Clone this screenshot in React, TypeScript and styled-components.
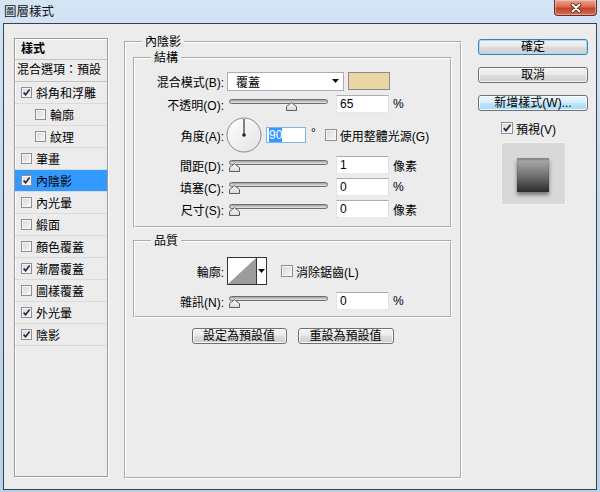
import styled, { createGlobalStyle } from 'styled-components';

const GlobalStyle = createGlobalStyle`
  html, body { margin: 0; padding: 0; background: #bcd3ec; }
  body {
    font-family: "Liberation Sans", "Noto Sans CJK TC", sans-serif;
    font-size: 12px;
    color: #000;
  }
`;

type StyleItem = { label: string; checked?: boolean; sub?: boolean; selected?: boolean };

const styleItems: StyleItem[] = [
  { label: '斜角和浮雕', checked: true },
  { label: '輪廓', sub: true },
  { label: '紋理', sub: true },
  { label: '筆畫' },
  { label: '內陰影', checked: true, selected: true },
  { label: '內光暈' },
  { label: '緞面' },
  { label: '顏色覆蓋' },
  { label: '漸層覆蓋', checked: true },
  { label: '圖樣覆蓋' },
  { label: '外光暈', checked: true },
  { label: '陰影', checked: true },
];

const Checkbox = ({ checked, size = 11 }: { checked?: boolean; size?: number }) => (
  <CheckBox $size={size}>
    {checked && (
      <svg width={size - 2} height={size - 2} viewBox="0 0 9 9">
        <path d="M1.6 4.6 L3.6 6.8 L7.6 1.6" fill="none" stroke="#1c2a48" strokeWidth="1.6" />
      </svg>
    )}
  </CheckBox>
);

const Caret = () => (
  <svg width="7" height="4" viewBox="0 0 7 4">
    <path d="M0 0 H7 L3.5 4 Z" fill="#111" />
  </svg>
);

const Slider = ({ value }: { value: number }) => (
  <SliderBox>
    <Track />
    <Thumb style={{ left: `${(value / 100) * 88}px` }}>
      <svg width="11" height="9" viewBox="0 0 11 9">
        <defs>
          <linearGradient id="thumbFill" x1="0" y1="0" x2="0" y2="1">
            <stop offset="0" stopColor="#ffffff" />
            <stop offset="1" stopColor="#d6d6d6" />
          </linearGradient>
        </defs>
        <path d="M0.5 8.5 V4.6 L5.5 0.6 L10.5 4.6 V8.5 Z" fill="url(#thumbFill)" stroke="#5c5c5c" />
      </svg>
    </Thumb>
  </SliderBox>
);

const Dial = () => (
  <svg width="36" height="36" viewBox="0 0 36 36">
    <defs>
      <linearGradient id="dialFill" x1="0" y1="0" x2="1" y2="1">
        <stop offset="0" stopColor="#ffffff" />
        <stop offset="1" stopColor="#e2e2e2" />
      </linearGradient>
    </defs>
    <circle cx="18" cy="18" r="17" fill="url(#dialFill)" stroke="#8a8a8a" />
    <path d="M18 18 V2" stroke="#333" strokeWidth="1.2" />
    <circle cx="18" cy="18" r="1.8" fill="#222" />
  </svg>
);

export default function App() {
  return (
    <>
      <GlobalStyle />
      <Window>
        <TitleBar>
          <Caption>圖層樣式</Caption>
          <CloseButton aria-label="關閉">
            <svg width="14" height="10" viewBox="0 0 14 10">
              <path d="M3.5 1.5 L10.5 8.5 M10.5 1.5 L3.5 8.5" stroke="#5b1a10" strokeWidth="3.6" strokeLinecap="round" />
              <path d="M3.5 1.5 L10.5 8.5 M10.5 1.5 L3.5 8.5" stroke="#fff" strokeWidth="2" strokeLinecap="round" />
            </svg>
          </CloseButton>
        </TitleBar>

        <Client>
          <StyleList>
            <ListHeader>樣式</ListHeader>
            <BlendRow>混合選項：預設</BlendRow>
            {styleItems.map((item) => (
              <ListItem key={item.label} $sub={item.sub} $selected={item.selected}>
                <Checkbox checked={item.checked} />
                <span>{item.label}</span>
              </ListItem>
            ))}
          </StyleList>

          <Group>
            <Legend>內陰影</Legend>
            <GroupBody>
              <SubGroup>
                <Legend>結構</Legend>
                <Rows $top={5} $bottom={7}>
                  <FieldRow $h={20}>
                    <FieldLabel>混合模式(B):</FieldLabel>
                    <Controls>
                      <Select>
                        <span>覆蓋</span>
                        <Caret />
                      </Select>
                      <Swatch $color="#e9d6a4" />
                    </Controls>
                  </FieldRow>
                  <FieldRow $h={22}>
                    <FieldLabel>不透明(O):</FieldLabel>
                    <Controls>
                      <Slider value={65} />
                      <NumberBox>65</NumberBox>
                      <Unit>%</Unit>
                    </Controls>
                  </FieldRow>
                  <FieldRow $h={36}>
                    <FieldLabel>角度(A):</FieldLabel>
                    <Controls>
                      <DialWrap>
                        <Dial />
                      </DialWrap>
                      <AngleBox>
                        <Highlight>90</Highlight>
                      </AngleBox>
                      <Degree>°</Degree>
                      <CheckLabel>
                        <Checkbox size={12} />
                        <span>使用整體光源(G)</span>
                      </CheckLabel>
                    </Controls>
                  </FieldRow>
                  <FieldRow $h={20}>
                    <FieldLabel>間距(D):</FieldLabel>
                    <Controls>
                      <Slider value={0} />
                      <NumberBox>1</NumberBox>
                      <Unit>像素</Unit>
                    </Controls>
                  </FieldRow>
                  <FieldRow $h={20}>
                    <FieldLabel>填塞(C):</FieldLabel>
                    <Controls>
                      <Slider value={0} />
                      <NumberBox>0</NumberBox>
                      <Unit>%</Unit>
                    </Controls>
                  </FieldRow>
                  <FieldRow $h={20}>
                    <FieldLabel>尺寸(S):</FieldLabel>
                    <Controls>
                      <Slider value={0} />
                      <NumberBox>0</NumberBox>
                      <Unit>像素</Unit>
                    </Controls>
                  </FieldRow>
                </Rows>
              </SubGroup>

              <SubGroup $gapTop={5}>
                <Legend>品質</Legend>
                <Rows $top={8} $bottom={5} $gap={6}>
                  <FieldRow $h={28}>
                    <FieldLabel>輪廓:</FieldLabel>
                    <Controls>
                      <ContourPicker>
                        <svg width="28" height="26" viewBox="0 0 28 26">
                          <rect width="28" height="26" fill="#fff" />
                          <polygon points="0,26 28,0 28,26" fill="#9c9c9c" />
                        </svg>
                        <ContourArrow>
                          <Caret />
                        </ContourArrow>
                      </ContourPicker>
                      <CheckLabel $ml={14}>
                        <Checkbox size={12} />
                        <span>消除鋸齒(L)</span>
                      </CheckLabel>
                    </Controls>
                  </FieldRow>
                  <FieldRow $h={20}>
                    <FieldLabel>雜訊(N):</FieldLabel>
                    <Controls>
                      <Slider value={0} />
                      <NumberBox>0</NumberBox>
                      <Unit>%</Unit>
                    </Controls>
                  </FieldRow>
                </Rows>
              </SubGroup>

              <DefaultButtons>
                <PushButton $w={95}>設定為預設值</PushButton>
                <PushButton $w={96}>重設為預設值</PushButton>
              </DefaultButtons>
            </GroupBody>
          </Group>

          <Side>
            <PushButton $variant="default">確定</PushButton>
            <PushButton>取消</PushButton>
            <PushButton $variant="hover">新增樣式(W)...</PushButton>
            <PreviewCheck>
              <Checkbox checked size={12} />
              <span>預視(V)</span>
            </PreviewCheck>
            <PreviewBox>
              <PreviewSquare />
            </PreviewBox>
          </Side>
        </Client>
      </Window>
    </>
  );
}

const Window = styled.div`
  width: 600px;
  height: 492px;
  display: flex;
  flex-direction: column;
  background: linear-gradient(180deg, #d3e4f5 0%, #c3d9ef 40%, #b8d0ea 100%);
`;

const TitleBar = styled.div`
  height: 23px;
  flex: none;
  display: flex;
  justify-content: space-between;
  align-items: flex-start;
`;

const Caption = styled.div`
  padding: 4px 0 0 4px;
  font-size: 12.5px;
  line-height: 16px;
  color: #111;
`;

const CloseButton = styled.div`
  width: 43px;
  height: 16px;
  margin-right: 3px;
  box-sizing: border-box;
  border: 1px solid #6b2a20;
  border-top: none;
  border-radius: 0 0 4px 4px;
  background: linear-gradient(180deg, #e9a796 0%, #d86a55 45%, #c2412b 55%, #d27059 100%);
  box-shadow: inset 0 0 0 1px rgba(255, 220, 210, 0.45);
  display: flex;
  align-items: center;
  justify-content: center;
`;

const Client = styled.div`
  flex: 1;
  margin: 0 3px 2px;
  border: 1px solid #34424f;
  background: #ececec;
  display: grid;
  grid-template-columns: 94px 338px 110px;
  column-gap: 16px;
  align-items: start;
  padding: 12px 0 0 10px;
`;

const StyleList = styled.div`
  margin-top: 2px;
  height: 439px;
  box-sizing: border-box;
  border: 1px solid #9a9a9a;
  box-shadow: 1px 1px 0 #fff, inset 1px 1px 0 #fff;
  display: flex;
  flex-direction: column;
`;

const ListHeader = styled.div`
  height: 21px;
  box-sizing: border-box;
  padding-left: 6px;
  line-height: 20px;
  font-weight: bold;
  border-bottom: 1px solid #c4c4c4;
`;

const BlendRow = styled.div`
  height: 22px;
  box-sizing: border-box;
  padding-left: 2px;
  line-height: 21px;
  white-space: nowrap;
  border-bottom: 1px solid #c4c4c4;
`;

const ListItem = styled.div<{ $sub?: boolean; $selected?: boolean }>`
  height: 22px;
  box-sizing: border-box;
  display: flex;
  align-items: center;
  gap: 4px;
  padding-left: ${(p) => (p.$sub ? 20 : 6)}px;
  border-bottom: 1px solid #dadada;
  background: ${(p) => (p.$selected ? '#3399ff' : 'transparent')};
  white-space: nowrap;
`;

const CheckBox = styled.span<{ $size: number }>`
  width: ${(p) => p.$size}px;
  height: ${(p) => p.$size}px;
  box-sizing: border-box;
  flex: none;
  border: 1px solid #8e8f8f;
  background: linear-gradient(135deg, #d5d7da 0%, #f8f8f8 100%);
  box-shadow: inset 0 0 0 1px #f6f6f6;
  display: inline-flex;
  align-items: center;
  justify-content: center;
`;

const Group = styled.fieldset`
  margin: -2px 0 0;
  padding: 0;
  min-width: 0;
  height: 445px;
  box-sizing: border-box;
  border: 2px groove #ffffff;
`;

const Legend = styled.legend`
  margin-left: 16px;
  padding: 0 3px;
  line-height: 16px;
  font-size: 12px;
`;

const GroupBody = styled.div`
  padding: 0 8px 0 7px;
  display: flex;
  flex-direction: column;
`;

const SubGroup = styled.fieldset<{ $gapTop?: number }>`
  margin: ${(p) => p.$gapTop ?? 0}px 0 0;
  padding: 0;
  min-width: 0;
  border: 2px groove #ffffff;
`;

const Rows = styled.div<{ $top: number; $bottom: number; $gap?: number }>`
  display: flex;
  flex-direction: column;
  gap: ${(p) => p.$gap ?? 2}px;
  padding: ${(p) => p.$top}px 0 ${(p) => p.$bottom}px;
`;

const FieldRow = styled.div<{ $h: number }>`
  height: ${(p) => p.$h}px;
  display: grid;
  grid-template-columns: 89px 1fr;
  column-gap: 3px;
  align-items: center;
`;

const FieldLabel = styled.span`
  text-align: right;
  white-space: nowrap;
`;

const Controls = styled.div`
  display: flex;
  align-items: center;
  height: 100%;
`;

const Select = styled.div`
  width: 117px;
  height: 19px;
  box-sizing: border-box;
  border: 1px solid #abadb3;
  background: #fff;
  display: flex;
  align-items: center;
  justify-content: space-between;
  padding: 0 4px 0 8px;
`;

const Swatch = styled.div<{ $color: string }>`
  width: 42px;
  height: 18px;
  margin-left: 4px;
  box-sizing: border-box;
  border: 1px solid #8a8a8a;
  background: ${(p) => p.$color};
`;

const SliderBox = styled.div`
  position: relative;
  width: 99px;
  height: 13px;
  margin: 3px 0 0 2px;
  flex: none;
`;

const Track = styled.div`
  height: 5px;
  box-sizing: border-box;
  border: 1px solid #6e6e6e;
  border-radius: 3px;
  background: linear-gradient(180deg, #a0a0a0 0%, #e8e8e8 100%);
`;

const Thumb = styled.div`
  position: absolute;
  top: 3px;
  width: 11px;
  height: 9px;
  line-height: 0;
`;

const NumberBox = styled.div`
  width: 53px;
  height: 18px;
  margin-left: 8px;
  box-sizing: border-box;
  border: 1px solid;
  border-color: #abadb3 #dbdfe6 #e3e9ef #e2e3ea;
  background: #fff;
  padding-left: 3px;
  line-height: 16px;
`;

const Unit = styled.span`
  margin-left: 4px;
  white-space: nowrap;
`;

const DialWrap = styled.div`
  margin-left: -1px;
  line-height: 0;
`;

const AngleBox = styled.div`
  width: 40px;
  height: 16px;
  margin-left: 4px;
  box-sizing: border-box;
  border: 1px solid #7eb4ea;
  background: #fff;
  padding-left: 2px;
  line-height: 14px;
`;

const Highlight = styled.span`
  background: #3399ff;
  color: #fff;
`;

const Degree = styled.span`
  margin-left: 5px;
  align-self: flex-start;
  margin-top: 9px;
`;

const CheckLabel = styled.label<{ $ml?: number }>`
  display: flex;
  align-items: center;
  gap: 3px;
  margin-left: ${(p) => p.$ml ?? 9}px;
  white-space: nowrap;
`;

const ContourPicker = styled.div`
  width: 40px;
  height: 28px;
  box-sizing: border-box;
  border: 1px solid #333;
  display: flex;
  background: #fff;
`;

const ContourArrow = styled.div`
  flex: 1;
  border-left: 1px solid #333;
  display: flex;
  align-items: center;
  justify-content: center;
`;

const DefaultButtons = styled.div`
  margin-top: 10px;
  display: flex;
  justify-content: center;
  gap: 11px;
`;

const PushButton = styled.div<{ $w?: number; $variant?: 'default' | 'hover' }>`
  ${(p) => (p.$w ? `width: ${p.$w}px;` : '')}
  height: 16px;
  box-sizing: border-box;
  border: 1px solid ${(p) => (p.$variant === 'default' ? '#3c7fb1' : '#707070')};
  border-radius: 3px;
  background: ${(p) =>
    p.$variant === 'hover'
      ? 'linear-gradient(180deg, #eaf6fd 0%, #d9f0fc 45%, #bee6fd 50%, #a7d9f5 100%)'
      : 'linear-gradient(180deg, #f2f2f2 0%, #ebebeb 45%, #dddddd 50%, #cfcfcf 100%)'};
  box-shadow: inset 0 0 0 1px ${(p) => (p.$variant === 'default' ? '#9fe0f8' : 'rgba(255,255,255,0.8)')};
  text-align: center;
  line-height: 14px;
  white-space: nowrap;
`;

const Side = styled.div`
  margin-top: 3px;
  display: flex;
  flex-direction: column;
  gap: 12px;
`;

const PreviewCheck = styled.div`
  margin-top: -3px;
  height: 16px;
  display: flex;
  align-items: center;
  justify-content: center;
  gap: 3px;
  padding-right: 9px;
`;

const PreviewBox = styled.div`
  margin-top: -6px;
  align-self: center;
  width: 65px;
  height: 63px;
  box-sizing: border-box;
  border: 1px solid #f4f4f4;
  background: #d8d8d8;
  display: flex;
  align-items: center;
  justify-content: center;
`;

const PreviewSquare = styled.div`
  width: 32px;
  height: 34px;
  margin-top: 3px;
  background: linear-gradient(180deg, #b2b2b2 0%, #7a7a7a 45%, #2c2c2c 100%);
  box-shadow: 0 3px 4px rgba(0, 0, 0, 0.45), inset 0 2px 2px rgba(0, 0, 0, 0.25);
`;
